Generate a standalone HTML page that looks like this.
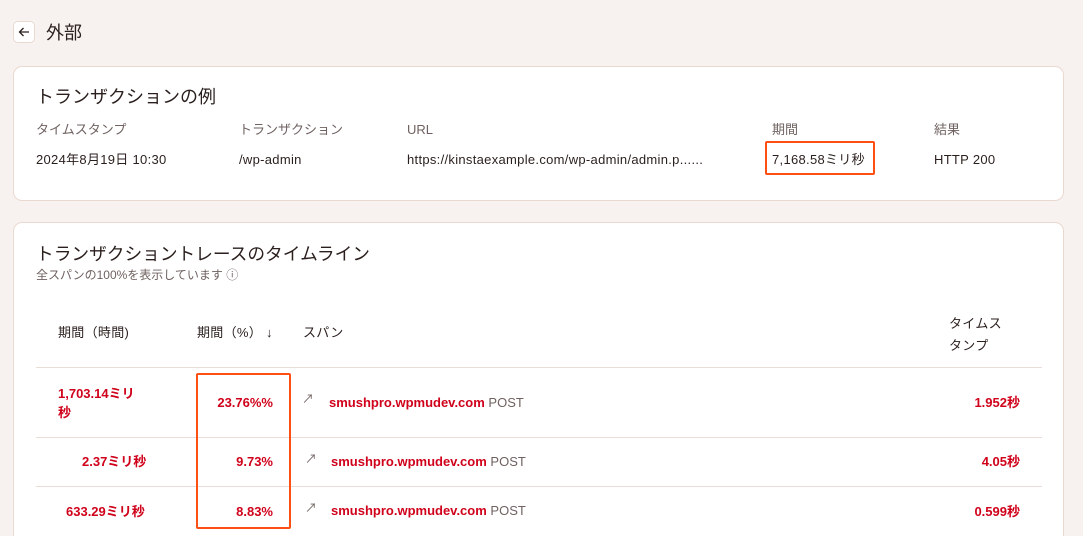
<!DOCTYPE html>
<html style="width:1083px;height:536px;overflow:hidden"><head><meta charset="utf-8"><style>
*{margin:0;padding:0;box-sizing:border-box}
body{width:1083px;height:536px;overflow:hidden;background:#f7f2ef;font-family:"Liberation Sans","Noto Sans CJK JP",sans-serif;color:#2a1f1d;position:relative}
.a{position:absolute;white-space:nowrap;line-height:16px}
.card{position:absolute;left:13px;width:1051px;background:#fff;border:1px solid #ead9d0;border-radius:9px}
.lbl{font-size:13px;color:#6f6260}
.v{font-size:13px;color:#2a1f1d;letter-spacing:0.3px}
.red{color:#d0021b;font-weight:bold;font-size:13px}
.line{position:absolute;left:36px;width:1006px;height:1px;background:#e8ddd7}
.box{position:absolute;border:2.5px solid #fb4f14;border-radius:2px}
</style></head><body>
<div class="a" style="left:13px;top:21px;width:22px;height:22px;border:1px solid #ead9d0;border-radius:5px;background:#fff"></div>
<svg class="a" style="left:17px;top:25px" width="14" height="14" viewBox="0 0 14 14"><path d="M12 7H2.5M6.5 3L2.5 7l4 4" stroke="#2a1f1d" stroke-width="1.3" fill="none"/></svg>
<div class="a" style="left:46px;top:22px;font-size:18px;line-height:22px">外部</div>

<div class="card" style="top:66px;height:135px"></div>
<div class="a" style="left:36px;top:86px;font-size:18px;line-height:22px">トランザクションの例</div>
<div class="a lbl" style="left:36px;top:122px">タイムスタンプ</div>
<div class="a lbl" style="left:239px;top:122px">トランザクション</div>
<div class="a lbl" style="left:407px;top:122px">URL</div>
<div class="a lbl" style="left:772px;top:122px">期間</div>
<div class="a lbl" style="left:934px;top:122px">結果</div>
<div class="a v" style="left:36px;top:152px">2024年8月19日 10:30</div>
<div class="a v" style="left:239px;top:152px">/wp-admin</div>
<div class="a v" style="left:407px;top:152px">https://kinstaexample.com/wp-admin/admin.p......</div>
<div class="a v" style="left:772px;top:152px">7,168.58ミリ秒</div>
<div class="box" style="left:765px;top:141px;width:110px;height:34px"></div>
<div class="a v" style="left:934px;top:152px">HTTP 200</div>

<div class="card" style="top:222px;height:330px"></div>
<div class="a" style="left:36px;top:243px;font-size:17.7px;line-height:22px">トランザクショントレースのタイムライン</div>
<div class="a" style="left:36px;top:267px;font-size:12px;color:#6f6260">全スパンの100%を表示しています ⓘ</div>
<div class="a v" style="left:58px;top:325px">期間（時間)</div>
<div class="a v" style="left:197px;top:325px">期間（%） ↓</div>
<div class="a v" style="left:303px;top:325px">スパン</div>
<div class="a v" style="left:949px;top:313px;line-height:22px">タイムス<br>タンプ</div>
<div class="line" style="top:367px"></div>
<div class="line" style="top:437px"></div>
<div class="line" style="top:486px"></div>

<div class="a red" style="left:58px;top:384px;line-height:19px">1,703.14ミリ<br>秒</div>
<div class="a red" style="left:82px;top:454px">2.37ミリ秒</div>
<div class="a red" style="left:66px;top:504px">633.29ミリ秒</div>
<div class="a red" style="right:810px;top:395px">23.76%%</div>
<div class="a red" style="right:810px;top:454px">9.73%</div>
<div class="a red" style="right:810px;top:504px">8.83%</div>
<div class="box" style="left:196px;top:373px;width:95px;height:156px"></div>
<div class="a" style="left:302px;top:391px;font-size:12px;color:#6f6260">↗</div>
<div class="a" style="left:305px;top:451px;font-size:12px;color:#6f6260">↗</div>
<div class="a" style="left:305px;top:500px;font-size:12px;color:#6f6260">↗</div>
<div class="a" style="left:329px;top:395px;font-size:13px"><b style="color:#d0021b">smushpro.wpmudev.com</b> <span style="color:#6f6260">POST</span></div>
<div class="a" style="left:331px;top:454px;font-size:13px"><b style="color:#d0021b">smushpro.wpmudev.com</b> <span style="color:#6f6260">POST</span></div>
<div class="a" style="left:331px;top:503px;font-size:13px"><b style="color:#d0021b">smushpro.wpmudev.com</b> <span style="color:#6f6260">POST</span></div>
<div class="a red" style="right:63px;top:395px">1.952秒</div>
<div class="a red" style="right:63px;top:454px">4.05秒</div>
<div class="a red" style="right:63px;top:504px">0.599秒</div>
</body></html>
